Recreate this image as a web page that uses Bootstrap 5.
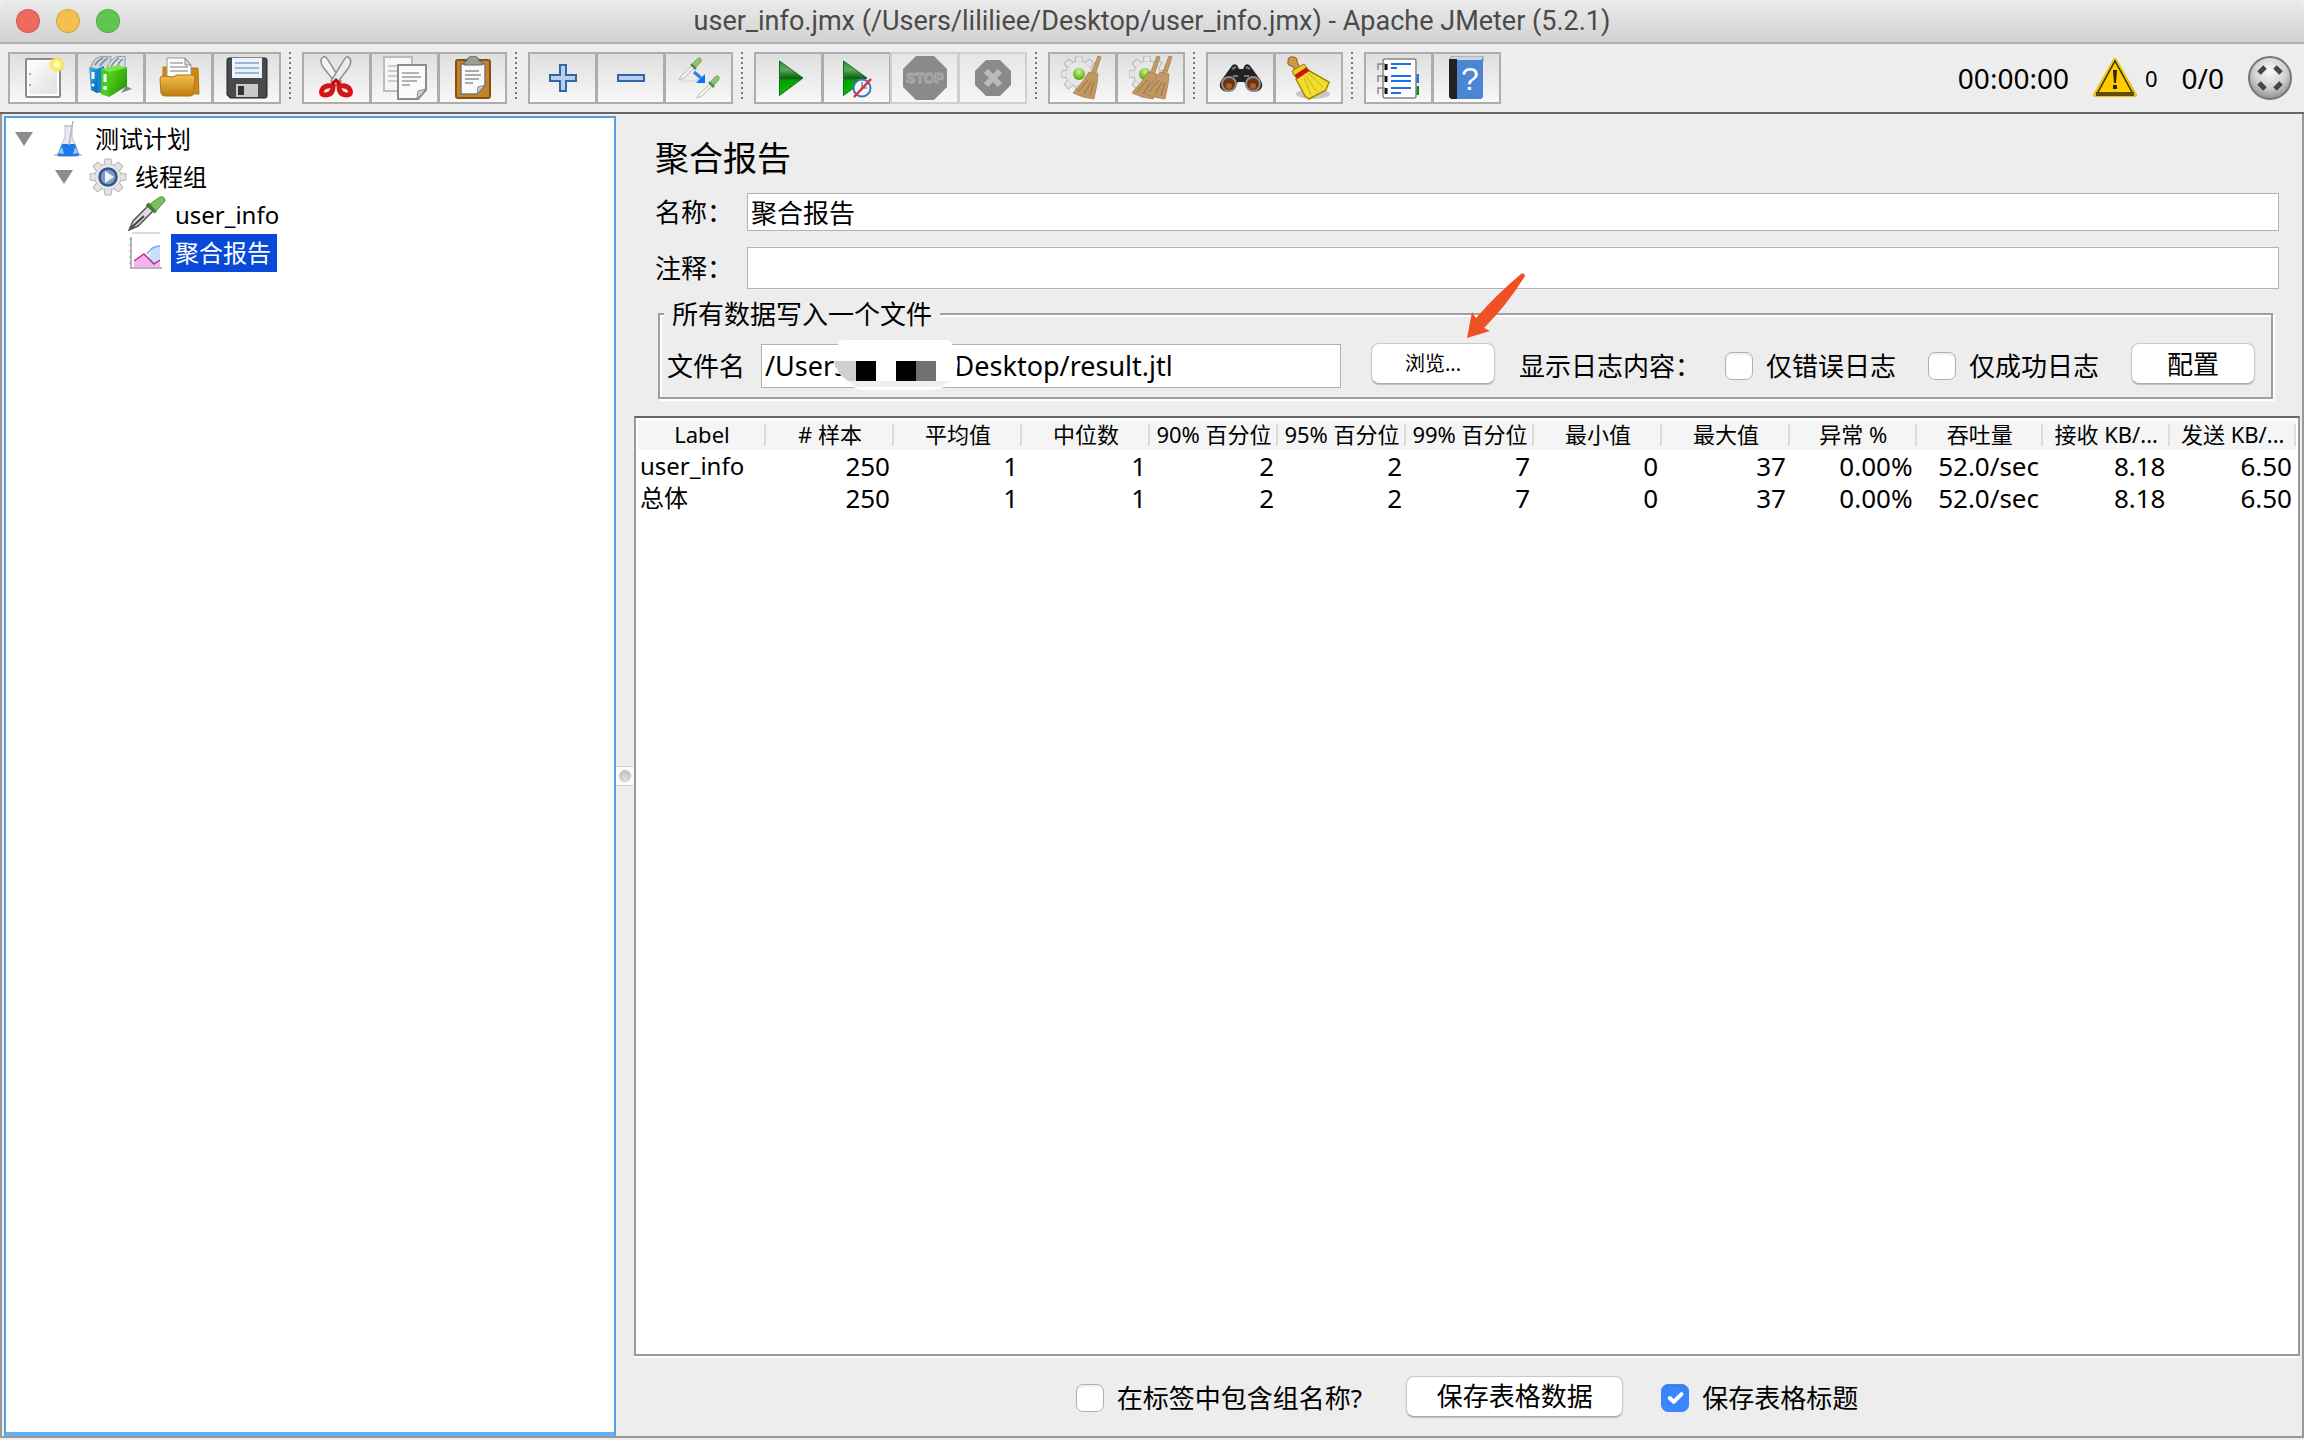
<!DOCTYPE html>
<html lang="zh-CN">
<head>
<meta charset="utf-8">
<meta name="viewport" content="width=device-width, initial-scale=1">
<title>user_info.jmx - Apache JMeter (5.2.1)</title>
<link href="https://cdn.jsdelivr.net/npm/bootstrap@5.3.0/dist/css/bootstrap.min.css" rel="stylesheet">
<style>
  body { background: #ededed; color: #000; font-family: "Noto Sans", "Noto Sans CJK SC", sans-serif; font-size: 26px; line-height: 36px; }
  .titlebar { height: 44px; background: linear-gradient(#ebebeb, #d2d2d2); border-bottom: 2px solid #b0b0b0; border-radius: 10px 10px 0 0; padding: 0 16px; }
  .titlebar h1 { font: 400 27px/42px Roboto, sans-serif; color: #4a4a4a; }
  .lights { gap: 16px; width: 120px; }
  .light { width: 24px; height: 24px; border-radius: 50%; border: 1px solid #0002; }
  .toolbar { padding: 8px 8px 8px; height: 70px; border-bottom: 2px solid #666; }
  .tool { width: 69px; height: 52px; margin-right: -1px; padding: 0; border: 2px solid #adadad; border-radius: 0; background: linear-gradient(#dfdfdf, #f8f8f8); display: flex; align-items: center; justify-content: center; }
  .tool:disabled { opacity: 1; border-color: #cfcfcf; background: linear-gradient(#e6e6e6, #f6f6f6); }
  .tool svg, .status svg { width: 44px; height: 44px; flex: none; display: block; }
  .toolsep { width: 2px; height: 50px; margin: 0 11px 0 9px; background: repeating-linear-gradient(#777 0 2px, transparent 2px 5px); }
  .status { font-size: 28px; margin-right: 4px; }
  .status .few { font-size: 22px; }
  .workarea { border: solid #999; border-width: 0 2px 2px 2px; margin-bottom: 2px; padding: 2px 0 0 2px; }
  .treepane { width: 612px; background: #fff; border: 2px solid #549fe0; border-bottom: 4px solid #62aef5; padding: 2px 0; font-size: 24px; }
  .treepane ul { list-style: none; margin: 0; padding: 0; }
  .treepane ul ul { padding-left: 40px; }
  .node { height: 38px; padding-left: 9px; }
  .twist { width: 18px; height: 14px; margin-right: 15px; }
  .node svg.pic { width: 40px; height: 38px; flex: none; }
  .node .name { padding: 0 5px 0 4px; line-height: 38px; margin-left: 3px; }
  .node .picked { background: #0849d9; color: #fff; padding-right: 6px; }
  .splitter { width: 18px; }
  .knobplate { height: 20px; background: #fafafa; border: solid #d0d0d0; border-width: 1px 0; }
  .knob { width: 12px; height: 12px; border-radius: 50%; background: radial-gradient(circle at 50% 70%, #ddd, #b8b8b8); }
  .mainpane { padding: 0 2px 0 0; }
  .formpart { padding: 20px 21px 0 21px; }
  .formpart h2 { font-size: 34px; line-height: 44px; margin: 0 0 13px; font-weight: 400; }
  .fieldrow { margin-bottom: 16px; }
  .fieldrow label { width: 92px; flex: none; }
  .field { border: 1px solid #b2b2b2; border-radius: 0; padding: 0 3px; font-size: 26px; line-height: 34px; height: 38px; color: #000; background: #fff; }
  .field.tall { height: 42px; }
  .filebox { border: 2px solid #9f9f9f; box-shadow: inset 2px 2px 0 #fff, 2px 2px 0 #fff; margin: 7px 6px 0 3px; padding: 0 16px 0 7px; height: 103px; }
  .filebox legend { float: none; width: auto; font-size: 26px; line-height: 36px; margin: 0 0 11px -3px; padding: 0 8px; background: #ededed; }
  .filebox .field { height: 44px; font-size: 27px; }
  .pathwrap { width: 580px; margin-right: 30px; }
  .maskblob { position: absolute; left: 73px; top: -4px; width: 124px; height: 50px; }
  .macbtn { background: #fff; border: 1px solid #c9c9c9; border-bottom-color: #aaa; border-radius: 8px; height: 41px; padding: 0; font-size: 26px; line-height: 36px; color: #000; box-shadow: 0 1px 1px #0003; width: 124px; margin-bottom: 4px; }
  .macbtn.minor { font-size: 20px; }
  .macbtn.wide { width: 217px; margin-left: 44px; margin-right: 38px; }
  .pointer { position: absolute; left: 94px; top: -70px; width: 62px; height: 66px; pointer-events: none; }
  .tick.form-check-input { width: 28px; height: 28px; margin: 0 13px 0 0; border: 1px solid #b0b0b0; border-radius: 7px; background-color: #fff; box-shadow: inset 0 2px 2px #0001; flex: none; }
  .tick.form-check-input:checked { background-color: #3a87fd; border-color: #3a87fd; background-size: 26px; }
  .results { margin-top: 17px; background: #fff; border: 2px solid #999; border-top-color: #666; box-shadow: 0 2px 0 #fff; padding: 2px; }
  .grid { table-layout: fixed; width: 100%; margin: 0; font-size: 24px; line-height: 32px; }
  .grid th { background: linear-gradient(#ddd, #ddd) right 4px / 2px 22px no-repeat #f5f5f5; font-size: 22px; font-weight: 400; line-height: 28px; text-align: center; padding: 0 0 2px; white-space: nowrap; overflow: hidden; }
  .grid th:nth-child(-n+9) { width: 128px; }
  .grid td { padding: 0 4px 0 2px; text-align: right; font-size: 26px; white-space: nowrap; }
  .grid td:first-child { text-align: left; font-size: 24px; }
  .footer { height: 80px; padding-top: 4px; }
</style>
<script src="https://cdn.jsdelivr.net/npm/bootstrap@5.3.0/dist/js/bootstrap.bundle.min.js"></script>
</head>
<body class="d-flex flex-column min-vh-100">
<svg width="0" height="0" class="position-absolute" aria-hidden="true">
  <defs>
    <linearGradient id="gGold" x1="0" y1="0" x2="0" y2="1"><stop offset="0" stop-color="#f0c050"/><stop offset="1" stop-color="#c17d11"/></linearGradient>
    <linearGradient id="gPlay" x1="0" y1="0" x2="0" y2="1"><stop offset="0" stop-color="#2f8a35"/><stop offset=".25" stop-color="#5aa860"/><stop offset=".5" stop-color="#0c5f10"/><stop offset=".55" stop-color="#00a000"/><stop offset="1" stop-color="#05c005"/></linearGradient>
    <linearGradient id="gPage" x1="0" y1="0" x2="1" y2="1"><stop offset="0" stop-color="#fdfdfd"/><stop offset="1" stop-color="#e0e0e0"/></linearGradient>
    <linearGradient id="gBlue" x1="0" y1="0" x2="1" y2="1"><stop offset="0" stop-color="#3db3f0"/><stop offset="1" stop-color="#0a63a8"/></linearGradient>
    <linearGradient id="gGreen" x1="0" y1="0" x2="1" y2="1"><stop offset="0" stop-color="#5fdc1c"/><stop offset="1" stop-color="#1b8a06"/></linearGradient>
    <radialGradient id="gBall" cx=".5" cy=".35" r=".65"><stop offset="0" stop-color="#fafafa"/><stop offset=".6" stop-color="#cfcfcf"/><stop offset="1" stop-color="#8d8d8d"/></radialGradient>
    <radialGradient id="gGlow"><stop offset="0" stop-color="#fff"/><stop offset=".4" stop-color="#fff68a"/><stop offset=".75" stop-color="#f5e45a"/><stop offset="1" stop-color="#f5e45a" stop-opacity="0"/></radialGradient>
    <radialGradient id="gLime" cx=".5" cy=".3" r=".7"><stop offset="0" stop-color="#c8f58a"/><stop offset="1" stop-color="#4ea50a"/></radialGradient>
    <g id="cog"><circle r="13" fill="url(#gPage)" stroke="#b5b5b5"/><g fill="#e4e4e4" stroke="#b5b5b5"><path id="tooth" d="M-4-12L-3-18H3L4-12Z"/><use href="#tooth" transform="rotate(45)"/><use href="#tooth" transform="rotate(90)"/><use href="#tooth" transform="rotate(135)"/><use href="#tooth" transform="rotate(180)"/><use href="#tooth" transform="rotate(225)"/><use href="#tooth" transform="rotate(270)"/><use href="#tooth" transform="rotate(315)"/></g><circle r="12.500" fill="#e6e6e6"/></g>
    <g id="besom"><path d="M37 0L40 1L34 19L30 18Z" fill="#c39a68" stroke="#a5804f" stroke-width=".8"/><path d="M28 16L37 18L36 28L33 43L22 41L12 37L22 25Z" fill="#c19764" stroke="#a98253" stroke-width=".8"/><path d="M27 24L17 36M30 26L23 38M33 26L29 40" stroke="#9a7344" stroke-width="1"/></g>
    <g id="dropper"><path d="M0 22L2 18L13 8L15 10L5 20Z" fill="#f4f4f4" stroke="#aaa" stroke-width=".8"/><path d="M12 6L17 11" stroke="#4f8a40" stroke-width="2.500"/><path d="M14 5L19 0Q23-1 22 4L17 9Z" fill="#8cc471" stroke="#6aa656" stroke-width=".8"/></g>
  </defs>
</svg>

<header class="titlebar d-flex align-items-center">
  <div class="lights d-flex"><span class="light" style="background:#ee6a5f"></span><span class="light" style="background:#f5bf4f"></span><span class="light" style="background:#61c554"></span></div>
  <h1 class="m-0 flex-fill text-center">user_info.jmx (/Users/lililiee/Desktop/user_info.jmx) - Apache JMeter (5.2.1)</h1>
  <div class="lights"></div>
</header>

<nav class="toolbar d-flex align-items-start">
  <div class="d-flex">
    <button class="btn tool" aria-label="新建"><svg viewBox="0 0 44 44"><rect x="5" y="3" width="34" height="38" rx="1" fill="#fff" stroke="#8b8d87" stroke-width="2"/><rect x="8" y="6" width="28" height="32" fill="url(#gPage)"/><path d="M9 17v2M9 28v2" stroke="#aaa" stroke-width="2"/><circle cx="36" cy="8.500" r="8" fill="url(#gGlow)"/></svg></button>
    <button class="btn tool" aria-label="模板"><svg viewBox="0 0 44 44"><path d="M32 37l11-4-6-3z" fill="#888"/><path d="M2 11Q4 3 10 1L22 0L21 14H4Z" fill="#cdd6da" stroke="#8b979d"/><path d="M18 13Q21 4 27 1L36 0V18Z" fill="#dde3e6" stroke="#8b979d"/><path d="M6 9Q9 4 14 2M11 10Q14 5 19 2M22 11Q25 5 30 2M28 12Q30 5 34 3" fill="none" stroke="#7d8b92" stroke-width="1.500"/><path d="M0 11L8 13V37L2 34Z" fill="url(#gBlue)"/><path d="M8 13L15 10V36L8 37Z" fill="#1187d4"/><path d="M20 15L38 11V30L20 41Z" fill="url(#gGreen)"/><path d="M12 13L20 15V41L12 38Z" fill="#4acb22"/><path d="M12 13L30 9L38 12L20 16Z" fill="#79e648"/><path d="M4 16v7M16 18v8" stroke="#fff" stroke-width="3"/><circle cx="16" cy="32" r="2" fill="#fff"/><circle cx="4" cy="29" r="1.500" fill="#fff"/></svg></button>
    <button class="btn tool" aria-label="打开"><svg viewBox="0 0 44 44"><path d="M6 20V11H12V20M34 12H41L42 38H30" fill="#c98a12" stroke="#b37a10"/><path d="M10 2H28L34 9V24H10Z" fill="#fcfcfc" stroke="#9a9a9a"/><path d="M28 2V9H34Z" fill="#ddd" stroke="#888"/><path d="M13 7h13M13 11h18M13 15h18" stroke="#a5a5a5" stroke-width="1.500"/><path d="M3 23Q3 20 6 20L16 21L20 19H35Q38 19 38 22L36 38Q36 40 33 40H8Q5 40 4 37Z" fill="url(#gGold)" stroke="#b0740f"/></svg></button>
    <button class="btn tool" aria-label="保存"><svg viewBox="0 0 44 44"><path d="M2 4Q2 2 4 2H40Q42 2 42 4V40Q42 42 40 42H5L2 39Z" fill="#484a4c" stroke="#222"/><path d="M7 2H37V22H7Z" fill="#eaf2fb"/><path d="M10 7h24M10 12h24M10 17h24" stroke="#9fb6d3" stroke-width="2"/><path d="M11 28H33V41H11Z" fill="#c9c9c9"/><rect x="13" y="30" width="6" height="9" fill="#333"/></svg></button>
  </div>
  <span class="toolsep"></span>
  <div class="d-flex">
    <button class="btn tool" aria-label="剪切"><svg viewBox="0 0 44 44"><path d="M8 1Q4 4 8 11L23 30L26 25L13 4Q11 0 8 1Z" fill="#f4f4f4" stroke="#8f918c" stroke-width="1.500"/><path d="M33 1Q38 4 34 11L20 30L16 25L29 4Q31 0 33 1Z" fill="#ececec" stroke="#8f918c" stroke-width="1.500"/><g fill="none" stroke="#d81313" stroke-width="5"><path d="M18 30Q18 39 10 39Q5 39 7 34Q9 29 18 30Z"/><path d="M24 30Q24 39 32 39Q37 39 35 34Q33 29 24 30Z"/></g><path d="M17 28l4-4 4 4" stroke="#c00" stroke-width="3" fill="none"/></svg></button>
    <button class="btn tool" aria-label="复制"><svg viewBox="0 0 44 44"><rect x="1" y="1" width="28" height="34" fill="#f6f6f6" stroke="#bdbdbd" stroke-width="2"/><path d="M5 10h9M5 15h9M5 20h9M5 25h9" stroke="#ccc" stroke-width="2"/><path d="M15 9H43V34L35 43H15Z" fill="#fafafa" stroke="#8b8d87" stroke-width="2"/><path d="M43 33L35 35L34 43Z" fill="#d5d5d5" stroke="#8b8d87"/><path d="M19 17h17M19 21h19M19 25h15M19 29h8" stroke="#b2b2b2" stroke-width="2"/></svg></button>
    <button class="btn tool" aria-label="粘贴"><svg viewBox="0 0 44 44"><rect x="5" y="4" width="34" height="38" rx="2" fill="#c4832a" stroke="#84520d" stroke-width="2"/><path d="M10 8H34V30L26 38H10Z" fill="#fafafa" stroke="#77796f" stroke-width="1.500"/><path d="M34 29l-7 2-1 7z" fill="#ccc" stroke="#888"/><path d="M14 15h14M14 19h16M14 23h14M14 27h8" stroke="#aaa" stroke-width="2"/><path d="M13 9V6Q17 5 17 2Q22-2 27 2Q27 5 31 6V9Z" fill="#9b9d97" stroke="#666" stroke-width="1"/></svg></button>
  </div>
  <span class="toolsep"></span>
  <div class="d-flex">
    <button class="btn tool" aria-label="全部展开"><svg viewBox="0 0 44 44"><path d="M19 9H25V19H35V25H25V35H19V25H9V19H19Z" fill="#b5d0ee" stroke="#3465a4" stroke-width="2"/></svg></button>
    <button class="btn tool" aria-label="全部折叠"><svg viewBox="0 0 44 44"><rect x="9" y="19" width="26" height="6" fill="#b5d0ee" stroke="#3465a4" stroke-width="2"/></svg></button>
    <button class="btn tool" aria-label="切换"><svg viewBox="0 0 44 44"><path d="M4 25q12 1 20-2" stroke="#ddd" stroke-width="2" fill="none"/><use href="#dropper" x="2" y="2"/><use href="#dropper" x="20" y="20"/><path d="M17 16l7 6" stroke="#2a7df0" stroke-width="3"/><path d="M28 18v9H19z" fill="#1070f5"/></svg></button>
  </div>
  <span class="toolsep"></span>
  <div class="d-flex">
    <button class="btn tool" aria-label="启动"><svg viewBox="0 0 44 44"><path d="M12.500 5V39.500L36 22Z" fill="url(#gPlay)" stroke="#147018"/></svg></button>
    <button class="btn tool" aria-label="不停顿开始"><svg viewBox="0 0 44 44"><path d="M8.500 5V39.500L32 22Z" fill="url(#gPlay)" stroke="#147018"/><circle cx="27" cy="32" r="8.500" fill="#eef5fc" stroke="#3f76b8" stroke-width="2"/><path d="M27 32V26M27 32h5" stroke="#789" stroke-width="1.500"/><path d="M19 41L36 23" stroke="#e03030" stroke-width="2.500"/></svg></button>
    <button class="btn tool" aria-label="停止" disabled><svg viewBox="0 0 44 44"><path d="M13 0H31L44 13V31L31 44H13L0 31V13Z" fill="#8a8a8a"/><text x="22" y="27" text-anchor="middle" font-family="Liberation Sans, sans-serif" font-weight="700" font-size="14" fill="#8a8a8a" stroke="#b2b2b2" stroke-width="1">STOP</text></svg></button>
    <button class="btn tool" aria-label="关闭" disabled><svg viewBox="0 0 44 44"><path d="M15 4H29L40 15V29L29 40H15L4 29V15Z" fill="#8a8a8a"/><path d="M15 15L29 29M29 15L15 29" stroke="#bbb" stroke-width="6"/></svg></button>
  </div>
  <span class="toolsep"></span>
  <div class="d-flex">
    <button class="btn tool" aria-label="清除"><svg viewBox="0 0 44 44"><use href="#cog" x="18" y="18"/><circle cx="18" cy="18" r="6" fill="url(#gLime)"/><use href="#besom"/></svg></button>
    <button class="btn tool" aria-label="清除全部"><svg viewBox="0 0 44 44"><use href="#cog" x="18" y="18"/><circle cx="16" cy="18" r="6" fill="url(#gLime)"/><use href="#besom" x="-9"/><use href="#besom" x="3"/></svg></button>
  </div>
  <span class="toolsep"></span>
  <div class="d-flex">
    <button class="btn tool" aria-label="查找"><svg viewBox="0 0 44 44"><path d="M12 11Q14 7 18 9L20 13H24L26 9Q30 7 32 11L40 22Q44 27 43 31Q40 37 33 35L27 29L25 26H19L17 29L11 35Q4 37 1 31Q0 27 4 22Z" fill="#222"/><path d="M13 13l4-2M27 11l4 2M14 20h5M25 20h5" stroke="#777" stroke-width="2"/><circle cx="10" cy="28" r="7" fill="#6b3513" stroke="#8c8c8c" stroke-width="2"/><circle cx="34" cy="28" r="7" fill="#6b3513" stroke="#8c8c8c" stroke-width="2"/><circle cx="10" cy="30" r="3" fill="#a8602c"/><circle cx="34" cy="30" r="3" fill="#a8602c"/></svg></button>
    <button class="btn tool" aria-label="重置查找"><svg viewBox="0 0 44 44"><ellipse cx="26" cy="38" rx="17" ry="5" fill="#c8c8c8"/><path d="M1 5Q1 0 6 1Q11 1 10 6L13 11L8 14L5 10Q0 10 1 5Z" fill="#cf9748" stroke="#8f5902"/><path d="M5 15L17 8L20 12L8 21Z" fill="#e8cf2a" stroke="#9a8200"/><path d="M19 13L42 26L39 34L22 43L18 40L9 23Z" fill="#f2dd32" stroke="#a08800" stroke-width="1.500"/><path d="M17 22l7 17M19 20l11 16M21 17l15 14" stroke="#c9ae12"/><path d="M9 21L21 13" stroke="#d01414" stroke-width="5"/></svg></button>
  </div>
  <span class="toolsep"></span>
  <div class="d-flex">
    <button class="btn tool" aria-label="函数助手对话框"><svg viewBox="0 0 44 44"><path d="M38 18h4v9h-4z" fill="#2672e8"/><path d="M38 30h4v9h-4z" fill="#0f8a0f"/><rect x="6" y="3" width="33" height="39" rx="2" fill="#fff" stroke="#888" stroke-width="1.500"/><path d="M14 8h20M14 12h6M14 20h20M14 25h20M14 32h20M14 37h10" stroke="#1a6ef0" stroke-width="2"/><path d="M9 8v6M9 20v6M9 32v6" stroke="#111" stroke-width="3"/><path d="M8 8H1v6M8 20H1v6M8 32H1v6" stroke="#888" stroke-width="1.500" fill="none"/></svg></button>
    <button class="btn tool" aria-label="帮助"><svg viewBox="0 0 44 44"><path d="M4 3L8 0H38V5H6Z" fill="#ccd6e0" stroke="#8896a8"/><path d="M4 3H12V43H6L4 41Z" fill="#222"/><path d="M12 4H36L38 2V41L36 43H12Z" fill="#4a86d4"/><text x="25" y="34" text-anchor="middle" font-family="Liberation Sans, sans-serif" font-size="32" fill="#fff">?</text></svg></button>
  </div>
  <div class="status ms-auto d-flex align-items-center align-self-center">
    <span>00:00:00</span>
    <svg class="ms-4" viewBox="0 0 44 44"><path d="M22 4L42 39H2Z" fill="#fdc900" stroke="#e8c410" stroke-width="4" stroke-linejoin="round"/><path d="M22 5L40 38H4Z" fill="#fc0" stroke="#3a3000" stroke-width="1.500"/><path d="M3 38h38" stroke="#5f4c00" stroke-width="4"/><path d="M20 14h4l-1 13h-2zM20 29h4v4h-4z" fill="#2a2200"/></svg>
    <span class="few ms-2">0</span>
    <span class="ms-4">0/0</span>
    <svg class="ms-4" viewBox="0 0 44 44"><circle cx="22" cy="22" r="21" fill="url(#gBall)" stroke="#777" stroke-width="2"/><g stroke="#454545" stroke-width="5"><path d="M11 17l6-6M27 11l6 6M11 27l6 6M33 27l-6 6"/></g></svg>
  </div>
</nav>

<main class="workarea d-flex flex-fill">
  <aside class="treepane flex-shrink-0">
    <ul>
      <li>
        <div class="node d-flex align-items-center"><svg class="twist" viewBox="0 0 18 14"><path d="M0 0H18L9 14Z" fill="#8c8c8c"/></svg><svg class="pic" viewBox="0 0 40 38"><ellipse cx="20" cy="35" rx="14" ry="2" fill="#bbb"/><path d="M17 6H24V17L31 34Q31 36 29 36H11Q9 36 10 34L17 17Z" fill="#e6eaf0" stroke="#bcc4d0"/><path d="M14 24H27L31 34Q31 36 29 36H11Q9 36 10 34Z" fill="#1c7be8"/><path d="M10 33l4-6 2 7zM31 33l-4-6-2 7z" fill="#9cc4f2"/><path d="M21 25L25 1" stroke="#b5b5b5" stroke-width="1.500"/><path d="M16 6h8" stroke="#bbb"/></svg><span class="name">测试计划</span></div>
        <ul>
          <li>
            <div class="node d-flex align-items-center"><svg class="twist" viewBox="0 0 18 14"><path d="M0 0H18L9 14Z" fill="#8c8c8c"/></svg><svg class="pic" viewBox="0 0 40 38"><use href="#cog" x="20" y="19"/><circle cx="20" cy="19" r="8.500" fill="#7f9cc8" stroke="#34538c" stroke-width="2.500"/><path d="M17 13L26 19L17 25Z" fill="#eef3fa"/></svg><span class="name">线程组</span></div>
            <ul>
              <li><div class="node d-flex align-items-center"><span class="twist"></span><svg class="pic" viewBox="0 0 40 38"><path d="M4 37h28" stroke="#ddd" stroke-width="2"/><path d="M1 34L5 25L21 9L26 14L10 30Z" fill="#ddd" stroke="#555" stroke-width="1.500"/><path d="M3 32L16 20" stroke="#444" stroke-width="2"/><path d="M19 8L28 16" stroke="#3f7a33" stroke-width="4"/><path d="M22 8L32 1Q37 0 37 5L28 15Z" fill="#7fbd62" stroke="#4f8f3c"/></svg><span class="name">user_info</span></div></li>
              <li><div class="node d-flex align-items-center"><span class="twist"></span><svg class="pic" viewBox="0 0 40 38"><path d="M3 3V34H34" fill="none" stroke="#b5b5b5" stroke-width="2"/><path d="M1 5h3M1 11h3M1 17h3M1 23h3M1 29h3" stroke="#aaa"/><path d="M21 24Q22 12 32 12V29H24Z" fill="#c4e2ff"/><path d="M19 20Q24 12 32 12" fill="none" stroke="#7fa9ea" stroke-width="1.500"/><path d="M6 33V27L16 20L26 30L32 26V33Z" fill="#f7b4f2"/><path d="M6 27L16 20L26 30L32 26" fill="none" stroke="#c03070" stroke-width="1.500"/></svg><span class="name picked">聚合报告</span></div></li>
            </ul>
          </li>
        </ul>
      </li>
    </ul>
  </aside>
  <div class="splitter d-flex align-items-center flex-shrink-0"><div class="knobplate w-100 d-flex align-items-center justify-content-center"><span class="knob"></span></div></div>
  <section class="mainpane d-flex flex-column flex-fill">
    <div class="formpart">
      <h2>聚合报告</h2>
      <div class="fieldrow d-flex align-items-center"><label for="nm">名称：</label><input id="nm" class="form-control field flex-fill" value="聚合报告"></div>
      <div class="fieldrow d-flex align-items-center mb-0"><label for="cm">注释：</label><input id="cm" class="form-control field tall flex-fill"></div>
      <fieldset class="filebox">
        <legend>所有数据写入一个文件</legend>
        <div class="d-flex align-items-center">
          <label for="fn" class="me-3">文件名</label>
          <div class="pathwrap position-relative">
            <input id="fn" class="form-control field" value="/Users/lililieee/Desktop/result.jtl">
            <svg class="maskblob" viewBox="0 0 124 50" aria-hidden="true"><path d="M4 5Q4 0 10 0H112Q118 0 118 5L124 22Q124 36 112 46Q105 50 96 50H26Q8 44 0 22Z" fill="#fff"/><path d="M0 21H22V41H14Q3 34 0 21Z" fill="#cfcfcf"/><path d="M14 41H116L108 47H22Z" fill="#efefef"/><rect x="22" y="21" width="20" height="20"/><rect x="62" y="21" width="20" height="20"/><rect x="82" y="21" width="20" height="20" fill="#707070"/></svg>
          </div>
          <div class="position-relative"><button class="btn macbtn minor">浏览...</button>
            <svg class="pointer" viewBox="0 0 62 66" aria-hidden="true"><path d="M2 65L7 39L11 45Q32 21 56 1Q59-1 60 3Q42 32 19 55L25 58Z" fill="#f05023"/></svg></div>
          <span class="ms-4">显示日志内容：</span>
          <label class="d-flex align-items-center ms-4"><input type="checkbox" class="form-check-input tick">仅错误日志</label>
          <label class="d-flex align-items-center ms-auto"><input type="checkbox" class="form-check-input tick">仅成功日志</label>
          <button class="btn macbtn ms-auto">配置</button>
        </div>
      </fieldset>
    </div>
    <div class="results flex-fill">
      <table class="grid">
        <thead><tr><th>Label</th><th># 样本</th><th>平均值</th><th>中位数</th><th>90% 百分位</th><th>95% 百分位</th><th>99% 百分位</th><th>最小值</th><th>最大值</th><th>异常 %</th><th>吞吐量</th><th>接收 KB/...</th><th>发送 KB/...</th></tr></thead>
        <tbody>
          <tr><td>user_info</td><td>250</td><td>1</td><td>1</td><td>2</td><td>2</td><td>7</td><td>0</td><td>37</td><td>0.00%</td><td>52.0/sec</td><td>8.18</td><td>6.50</td></tr>
          <tr><td>总体</td><td>250</td><td>1</td><td>1</td><td>2</td><td>2</td><td>7</td><td>0</td><td>37</td><td>0.00%</td><td>52.0/sec</td><td>8.18</td><td>6.50</td></tr>
        </tbody>
      </table>
    </div>
    <div class="footer d-flex align-items-center justify-content-center">
      <label class="d-flex align-items-center"><input type="checkbox" class="form-check-input tick">在标签中包含组名称?</label>
      <button class="btn macbtn wide">保存表格数据</button>
      <label class="d-flex align-items-center"><input type="checkbox" class="form-check-input tick" checked>保存表格标题</label>
    </div>
  </section>
</main>
</body>
</html>
